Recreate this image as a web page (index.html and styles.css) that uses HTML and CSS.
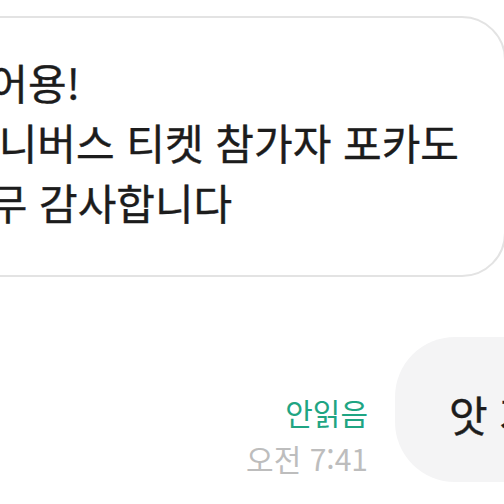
FILE: index.html
```html
<!DOCTYPE html>
<html lang="ko">
<head>
<meta charset="utf-8"/>
<meta name="viewport" content="width=device-width, initial-scale=1.0"/>
<title>채팅</title>
<link rel="stylesheet" href="styles.css">
</head>
<body>
<div class="chat">
  <div class="msg in">
    <div class="bubble">
      <div class="line l1">받았어용!</div>
      <div class="line l2">유니버스 티켓 참가자 포카도</div>
      <div class="line l3">너무 감사합니다</div>
    </div>
  </div>
  <div class="msg out">
    <div class="meta">
      <span class="unread">안읽음</span>
      <span class="time">오전 7:41</span>
    </div>
    <div class="bubble">앗 저도 감사해요</div>
  </div>
</div>
</body>
</html>
```
FILE: styles.css
```css
body {
  margin: 0;
  background: #fff;
  font-family: "Noto Sans CJK KR", "Noto Sans", sans-serif;
  color: #1c1c1c;
  overflow: hidden;
}
.chat {
  width: 504px;
  height: 504px;
  overflow: hidden;
  padding-top: 16px;
  box-sizing: border-box;
}
/* received */
.msg.in .bubble {
  margin-left: -80px;
  width: 586px;
  box-sizing: border-box;
  border: 2px solid #e3e3e3;
  border-radius: 44px;
  padding: 34px 0 43px 38px;
  font-size: 42px;
  line-height: 60px;
  white-space: nowrap;
  -webkit-text-stroke: 0.4px #1c1c1c;
}
.l1 {
  text-indent: -48px;
}
.l3 {
  text-indent: -10px;
}
/* sent */
.msg.out {
  display: flex;
  align-items: flex-end;
  margin-top: 60px;
}
.meta {
  flex: 0 0 368px;
  display: flex;
  flex-direction: column;
  align-items: flex-end;
  font-size: 30px;
  line-height: 40px;
  margin-bottom: 4px;
}
.unread {
  color: #1fa583;
  margin-bottom: 6px;
}
.time {
  color: #bdbdbd;
}
.msg.out .bubble {
  margin-left: 27px;
  flex: 0 0 auto;
  height: 145px;
  box-sizing: border-box;
  background: #f4f4f5;
  border-radius: 60px;
  padding: 8px 40px 0 54px;
  font-size: 42px;
  line-height: 137px;
  white-space: nowrap;
  -webkit-text-stroke: 0.4px #1c1c1c;
}
```
